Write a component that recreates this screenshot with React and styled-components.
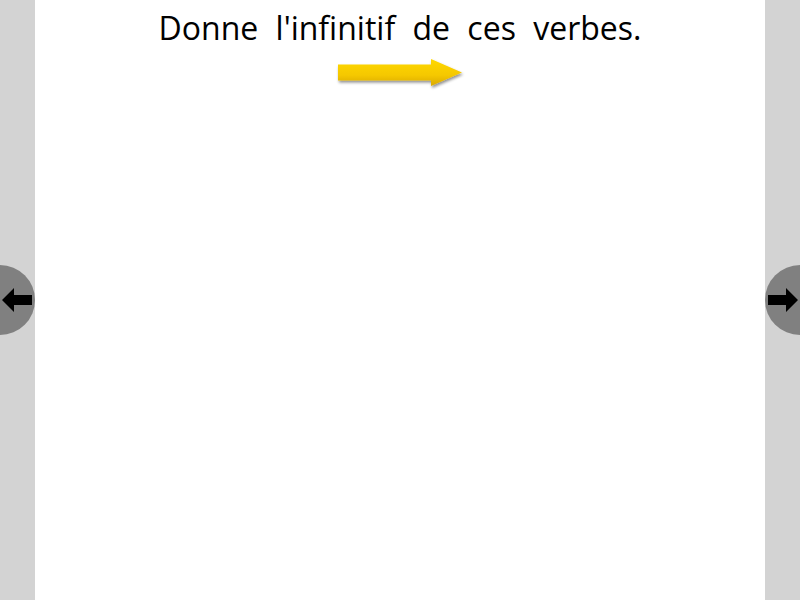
import React from "react";
import styled, { createGlobalStyle } from "styled-components";

const Global = createGlobalStyle`
  html, body { margin: 0; padding: 0; background: #d3d3d3; }
  body { font-family: "Open Sans", "Noto Sans", sans-serif; }
`;

const Shell = styled.div`
  display: flex;
  justify-content: center;
  height: 600px;
  width: 800px;
  background: #d3d3d3;
  position: relative;
  overflow: hidden;
`;

const Page = styled.div`
  width: 730px;
  height: 600px;
  background: #ffffff;
  display: flex;
  flex-direction: column;
  align-items: center;
`;

const Title = styled.h1`
  margin: 6px 0 0 0;
  font-weight: 400;
  font-size: 32px;
  line-height: 44px;
  color: #000;
  word-spacing: 9px;
`;

const ArrowWrap = styled.div`
  margin-top: 5px;
  width: 130px;
  height: 36px;
`;

const NavButton = styled.div`
  position: absolute;
  top: 265px;
  ${(p) => (p.$side === "left" ? "left: -35px;" : "right: -35px;")}
  width: 70px;
  height: 70px;
  border-radius: 50%;
  background: #808080;
  display: flex;
  align-items: center;
  justify-content: ${(p) => (p.$side === "left" ? "flex-end" : "flex-start")};
`;

const NavIcon = styled.svg`
  width: 30px;
  height: 24px;
  margin: ${(p) => (p.$side === "left" ? "0 3px 0 0" : "0 0 0 3px")};
`;

function YellowArrow() {
  return (
    <svg width="130" height="36" viewBox="0 0 130 36">
      <defs>
        <linearGradient id="ya" x1="0" y1="0" x2="0" y2="1">
          <stop offset="0" stopColor="#ffd800" />
          <stop offset="0.6" stopColor="#f5c800" />
          <stop offset="1" stopColor="#d9a800" />
        </linearGradient>
        <filter id="sh" x="-10%" y="-20%" width="130%" height="160%">
          <feGaussianBlur in="SourceAlpha" stdDeviation="1.5" />
          <feOffset dx="1" dy="2" result="o" />
          <feComponentTransfer>
            <feFuncA type="linear" slope="0.45" />
          </feComponentTransfer>
          <feMerge>
            <feMergeNode />
            <feMergeNode in="SourceGraphic" />
          </feMerge>
        </filter>
      </defs>
      <path
        d="M3 9.5 L96 9.5 L96 4 L127 17.5 L96 31 L96 25.5 L3 25.5 Z"
        fill="url(#ya)"
        filter="url(#sh)"
      />
    </svg>
  );
}

export default function App() {
  return (
    <>
      <Global />
      <Shell>
        <Page>
          <Title>Donne l'infinitif de ces verbes.</Title>
          <ArrowWrap>
            <YellowArrow />
          </ArrowWrap>
        </Page>
        <NavButton $side="left">
          <NavIcon $side="left" viewBox="0 0 30 24">
            <path d="M0 12 L12 0 L12 7 L30 7 L30 17 L12 17 L12 24 Z" fill="#000" />
          </NavIcon>
        </NavButton>
        <NavButton $side="right">
          <NavIcon $side="right" viewBox="0 0 30 24">
            <path d="M30 12 L18 0 L18 7 L0 7 L0 17 L18 17 L18 24 Z" fill="#000" />
          </NavIcon>
        </NavButton>
      </Shell>
    </>
  );
}
